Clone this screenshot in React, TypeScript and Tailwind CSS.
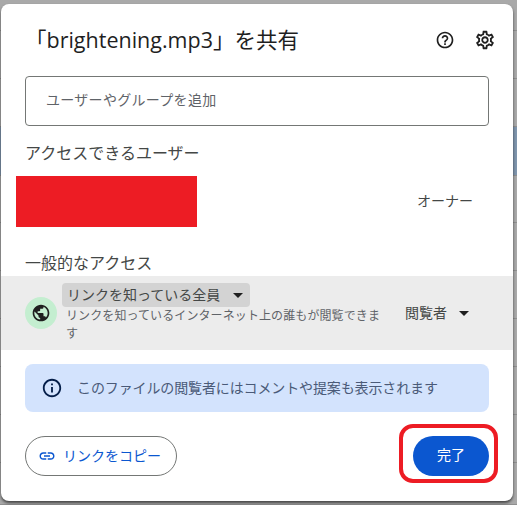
import { MdOutlineHelpOutline, MdOutlineSettings, MdPublic, MdLink, MdInfoOutline, MdArrowDropDown } from 'react-icons/md'

const bgRows = [
  'h-[31px]',
  'h-[48px]',
  'h-[48px]',
  'h-[49px] bg-[#7f95ad]',
  'h-[47px]',
  'h-[48px]',
  'h-[48px]',
  'h-[48px]',
  'h-[48px]',
  'h-[48px]',
  'h-[42px]',
]

export default function App() {
  return (
    <div className="relative w-[517px] h-[505px] overflow-hidden bg-[#a9a9a9] font-['Noto_Sans_CJK_JP','Noto_Sans_CJK_SC',sans-serif]">
      {/* Page behind the dialog */}
      <div className="flex flex-col">
        {bgRows.map((row, i) => (
          <div key={i} className={`${row} border-b border-[#8f8f8f]`} />
        ))}
      </div>

      {/* Dialog */}
      <div className="absolute left-[1px] top-[4px] w-[512px] h-[497px] bg-white rounded-[8px] shadow-[0_2px_3px_rgba(0,0,0,0.6)] flex flex-col">
        <div className="flex items-center h-[72px] pl-[24px] pr-[17px] text-[#1f1f1f]">
          <h1 className="text-[21.5px] leading-[28px] font-normal font-['Open_Sans','Noto_Sans_CJK_JP',sans-serif] flex-1">「brightening.mp3」を共有</h1>
          <MdOutlineHelpOutline className="w-[20px] h-[20px] mr-[19px]" />
          <MdOutlineSettings className="w-[22px] h-[22px]" />
        </div>

        <div className="mx-[24px] h-[50px] border border-[#747775] rounded-[4px] flex items-center pl-[20px] pb-[4px] text-[14px] tracking-[0.3px] text-[#5f6368]">
          ユーザーやグループを追加
        </div>

        <div className="mt-[14px] ml-[24px] text-[16px] leading-[24px] text-[#444746]">アクセスできるユーザー</div>

        <div className="mt-[12px] flex items-center justify-between pl-[15px] pr-[40px]">
          <div className="w-[181px] h-[51px] bg-[#ed1c24]" />
          <span className="text-[14px] text-[#444746] pb-[2px]">オーナー</span>
        </div>

        <div className="mt-[23px] ml-[24px] text-[16px] leading-[24px] text-[#444746]">一般的なアクセス</div>

        <div className="mt-[2px] h-[74px] bg-[#ececec] flex items-center pl-[24px] pr-[16px]">
          <div className="w-[32px] h-[32px] rounded-full bg-[#c4eed0] flex items-center justify-center mr-[5px] shrink-0">
            <MdPublic className="w-[20px] h-[20px] text-[#1f1f1f]" />
          </div>
          <div className="w-[320px] flex flex-col self-start mt-[7px]">
            <div className="w-[188px] h-[24px] bg-[#d3d3d3] rounded-[4px] flex items-center pl-[5px] text-[14px] text-[#444746]">
              <span className="pb-[2px] whitespace-nowrap">リンクを知っている全員</span>
              <MdArrowDropDown className="w-[24px] h-[24px] ml-[6px] shrink-0 text-[#1f1f1f]" />
            </div>
            <p className="pl-[4px] -mt-[1px] text-[12px] tracking-[0.1px] leading-[18px] text-[#5f6368]">リンクを知っているインターネット上の誰もが閲覧できます</p>
          </div>
          <div className="ml-[23px] flex items-center text-[14px] text-[#444746]">
            <span className="pb-[2px]">閲覧者</span>
            <MdArrowDropDown className="w-[24px] h-[24px] ml-[5px] text-[#1f1f1f]" />
          </div>
        </div>

        <div className="mt-[14px] mx-[24px] h-[48px] bg-[#d3e3fd] rounded-[8px] flex items-center pl-[16px] w-[464px] text-[14px] tracking-[-0.12px] text-[#4a5a78]">
          <MdInfoOutline className="w-[22px] h-[22px] text-[#041e49] mr-[14px]" />
          <span className="pb-[2px]">このファイルの閲覧者にはコメントや提案も表示されます</span>
        </div>

        <div className="mt-[24px] mx-[24px] flex items-center justify-between w-[464px]">
          <button className="h-[40px] w-[152px] border border-[#747775] rounded-full flex items-center pl-[12px] text-[14px] text-[#0b57d0]">
            <MdLink className="w-[18px] h-[18px] mr-[7px]" />
            <span className="pb-[2px]">リンクをコピー</span>
          </button>
          <button className="h-[40px] w-[76px] pb-[4px] bg-[#0b57d0] rounded-full text-[14px] text-white">完了</button>
        </div>
      </div>

      {/* Red annotation around the done button */}
      <div className="absolute left-[399px] top-[424px] w-[99px] h-[59px] border-[4px] border-[#ed1c24] rounded-[14px]" />
    </div>
  )
}
